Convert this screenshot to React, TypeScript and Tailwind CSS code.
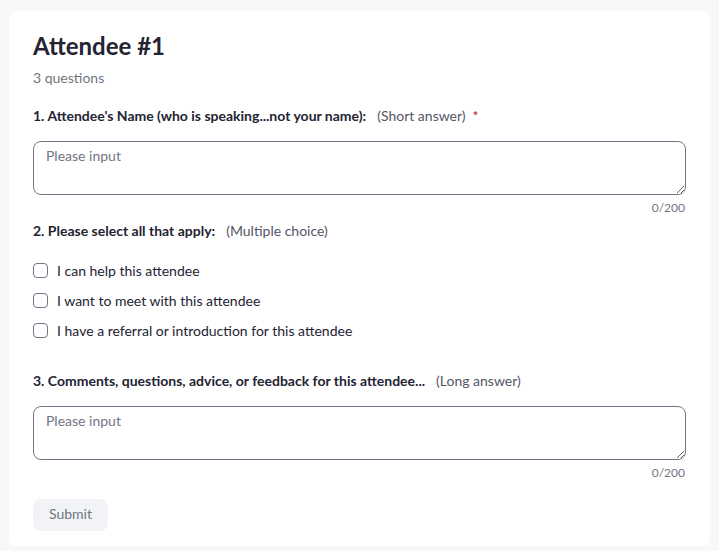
import React from "react";

const options = [
  "I can help this attendee",
  "I want to meet with this attendee",
  "I have a referral or introduction for this attendee",
];

function Counter() {
  return (
    <div className="mt-[5px] pr-px text-right text-[12px] leading-[16px] text-[#747487]">0/200</div>
  );
}

function Field() {
  return (
    <textarea
      placeholder="Please input"
      className="mt-[15px] block h-[54px] w-full resize-y rounded-lg border border-[#747487] bg-white px-[12px] py-[4px] text-[14px] leading-[20px] text-[#232333] outline-none placeholder:text-[#747487]"
    />
  );
}

export default function App() {
  return (
    <div className="min-h-[551px] w-full bg-[#f7f8fa] pt-[11px] pb-[5px] px-[9px] font-['Lato','Noto_Sans',sans-serif]">
      <div className="rounded-lg bg-white px-6 pt-[19px] pb-[15px]">
        <h1 className="text-[24px] font-bold leading-[32px] text-[#232333]">Attendee #1</h1>
        <div className="mt-[6px] text-[14px] leading-[20px] text-[#6e7680]">3 questions</div>

        {/* question 1 */}
        <div className="mt-[18px] text-[14px] leading-[20px]">
          <span className="font-bold text-[#232333]">1. Attendee's Name (who is speaking...not your name):</span>
          <span className="ml-[11px] text-[#555566]">(Short answer)</span>
          <span className="ml-[7px] text-[#b8172b]">*</span>
        </div>
        <Field />
        <Counter />

        {/* question 2 */}
        <div className="mt-[5px] text-[14px] leading-[20px]">
          <span className="font-bold text-[#232333]">2. Please select all that apply:</span>
          <span className="ml-[11px] text-[#555566]">(Multiple choice)</span>
        </div>
        <div className="mt-[19px] flex flex-col gap-[10px]">
          {options.map((o) => (
            <label key={o} className="flex h-[20px] items-center text-[14px] text-[#232333]">
              <span className="h-[15px] w-[15px] rounded-[4px] border border-[#747487] bg-white" />
              <span className="ml-[9px]">{o}</span>
            </label>
          ))}
        </div>

        {/* question 3 */}
        <div className="mt-[31px] text-[14px] leading-[20px]">
          <span className="font-bold text-[#232333]">3. Comments, questions, advice, or feedback for this attendee...</span>
          <span className="ml-[11px] text-[#555566]">(Long answer)</span>
        </div>
        <Field />
        <Counter />

        <button className="mt-[18px] h-[32px] w-[75px] rounded-lg bg-[#f1f3f6] pb-[4px] text-[14px] text-[#6e7680]">
          Submit
        </button>
      </div>
    </div>
  );
}
